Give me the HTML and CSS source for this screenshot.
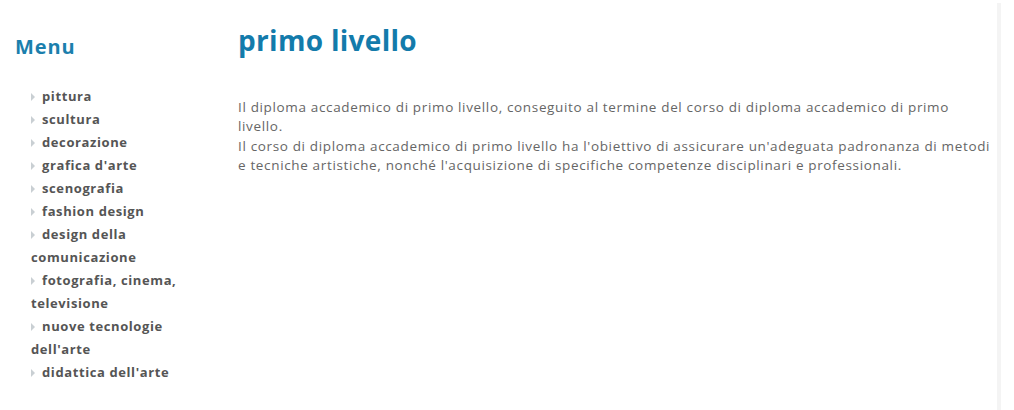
FILE: index.html
```html
<!DOCTYPE html>
<html lang="it">
<head>
<meta charset="utf-8">
<title>primo livello</title>
<link rel="stylesheet" href="styles.css">
</head>
<body>
<div class="page">
  <aside class="sidebar">
    <h2 class="menu-title">Menu</h2>
    <ul class="menu">
      <li><span class="arrow"></span>pittura</li>
      <li><span class="arrow"></span>scultura</li>
      <li><span class="arrow"></span>decorazione</li>
      <li><span class="arrow"></span>grafica d'arte</li>
      <li><span class="arrow"></span>scenografia</li>
      <li><span class="arrow"></span>fashion design</li>
      <li><span class="arrow"></span>design della comunicazione</li>
      <li><span class="arrow"></span>fotografia, cinema, televisione</li>
      <li><span class="arrow"></span>nuove tecnologie dell'arte</li>
      <li><span class="arrow"></span>didattica dell'arte</li>
    </ul>
  </aside>
  <main class="content">
    <h1 class="title">primo livello</h1>
    <p class="text">Il diploma accademico di primo livello, conseguito al termine del corso di diploma accademico di primo livello.<br>Il corso di diploma accademico di primo livello ha l'obiettivo di assicurare un'adeguata padronanza di metodi e tecniche artistiche, nonché l'acquisizione di specifiche competenze disciplinari e professionali.</p>
  </main>
  <div class="edge"></div>
</div>
</body>
</html>
```
FILE: styles.css
```css
html, body {
  margin: 0;
  padding: 0;
  background: #fff;
}
body {
  font-family: "Open Sans", "Noto Sans", sans-serif;
}
.page {
  display: flex;
  align-items: stretch;
  min-height: 410px;
}
.sidebar {
  width: 190px;
  flex: 0 0 190px;
  padding-left: 15px;
  box-sizing: border-box;
}
.menu-title {
  margin: 34px 0 0 0;
  font-size: 20px;
  line-height: 26px;
  font-weight: 700;
  color: #1b7fad;
  letter-spacing: 0.9px;
}
.menu {
  list-style: none;
  margin: 25px 0 0 0;
  padding: 0 0 0 16px;
}
.menu li {
  font-size: 13px;
  line-height: 23px;
  font-weight: 700;
  color: #555;
  letter-spacing: 0.6px;
}
.arrow {
  display: inline-block;
  width: 0;
  height: 0;
  border-top: 4px solid transparent;
  border-bottom: 4px solid transparent;
  border-left: 4px solid #c9cfd3;
  margin-right: 7px;
  vertical-align: 0;
}
.content {
  flex: 1 1 auto;
  padding-left: 48px;
  padding-right: 4px;
}
.title {
  margin: 22px 0 0 0;
  font-size: 28px;
  line-height: 36px;
  font-weight: 700;
  color: #137bab;
  letter-spacing: 0.3px;
}
.text {
  margin: 40px 0 0 0;
  font-size: 13.5px;
  line-height: 19.3px;
  color: #666;
  letter-spacing: 0.65px;
}
.edge {
  flex: 0 0 4px;
  margin-top: 3px;
  margin-right: 13px;
  background: #f4f4f4;
}
```
